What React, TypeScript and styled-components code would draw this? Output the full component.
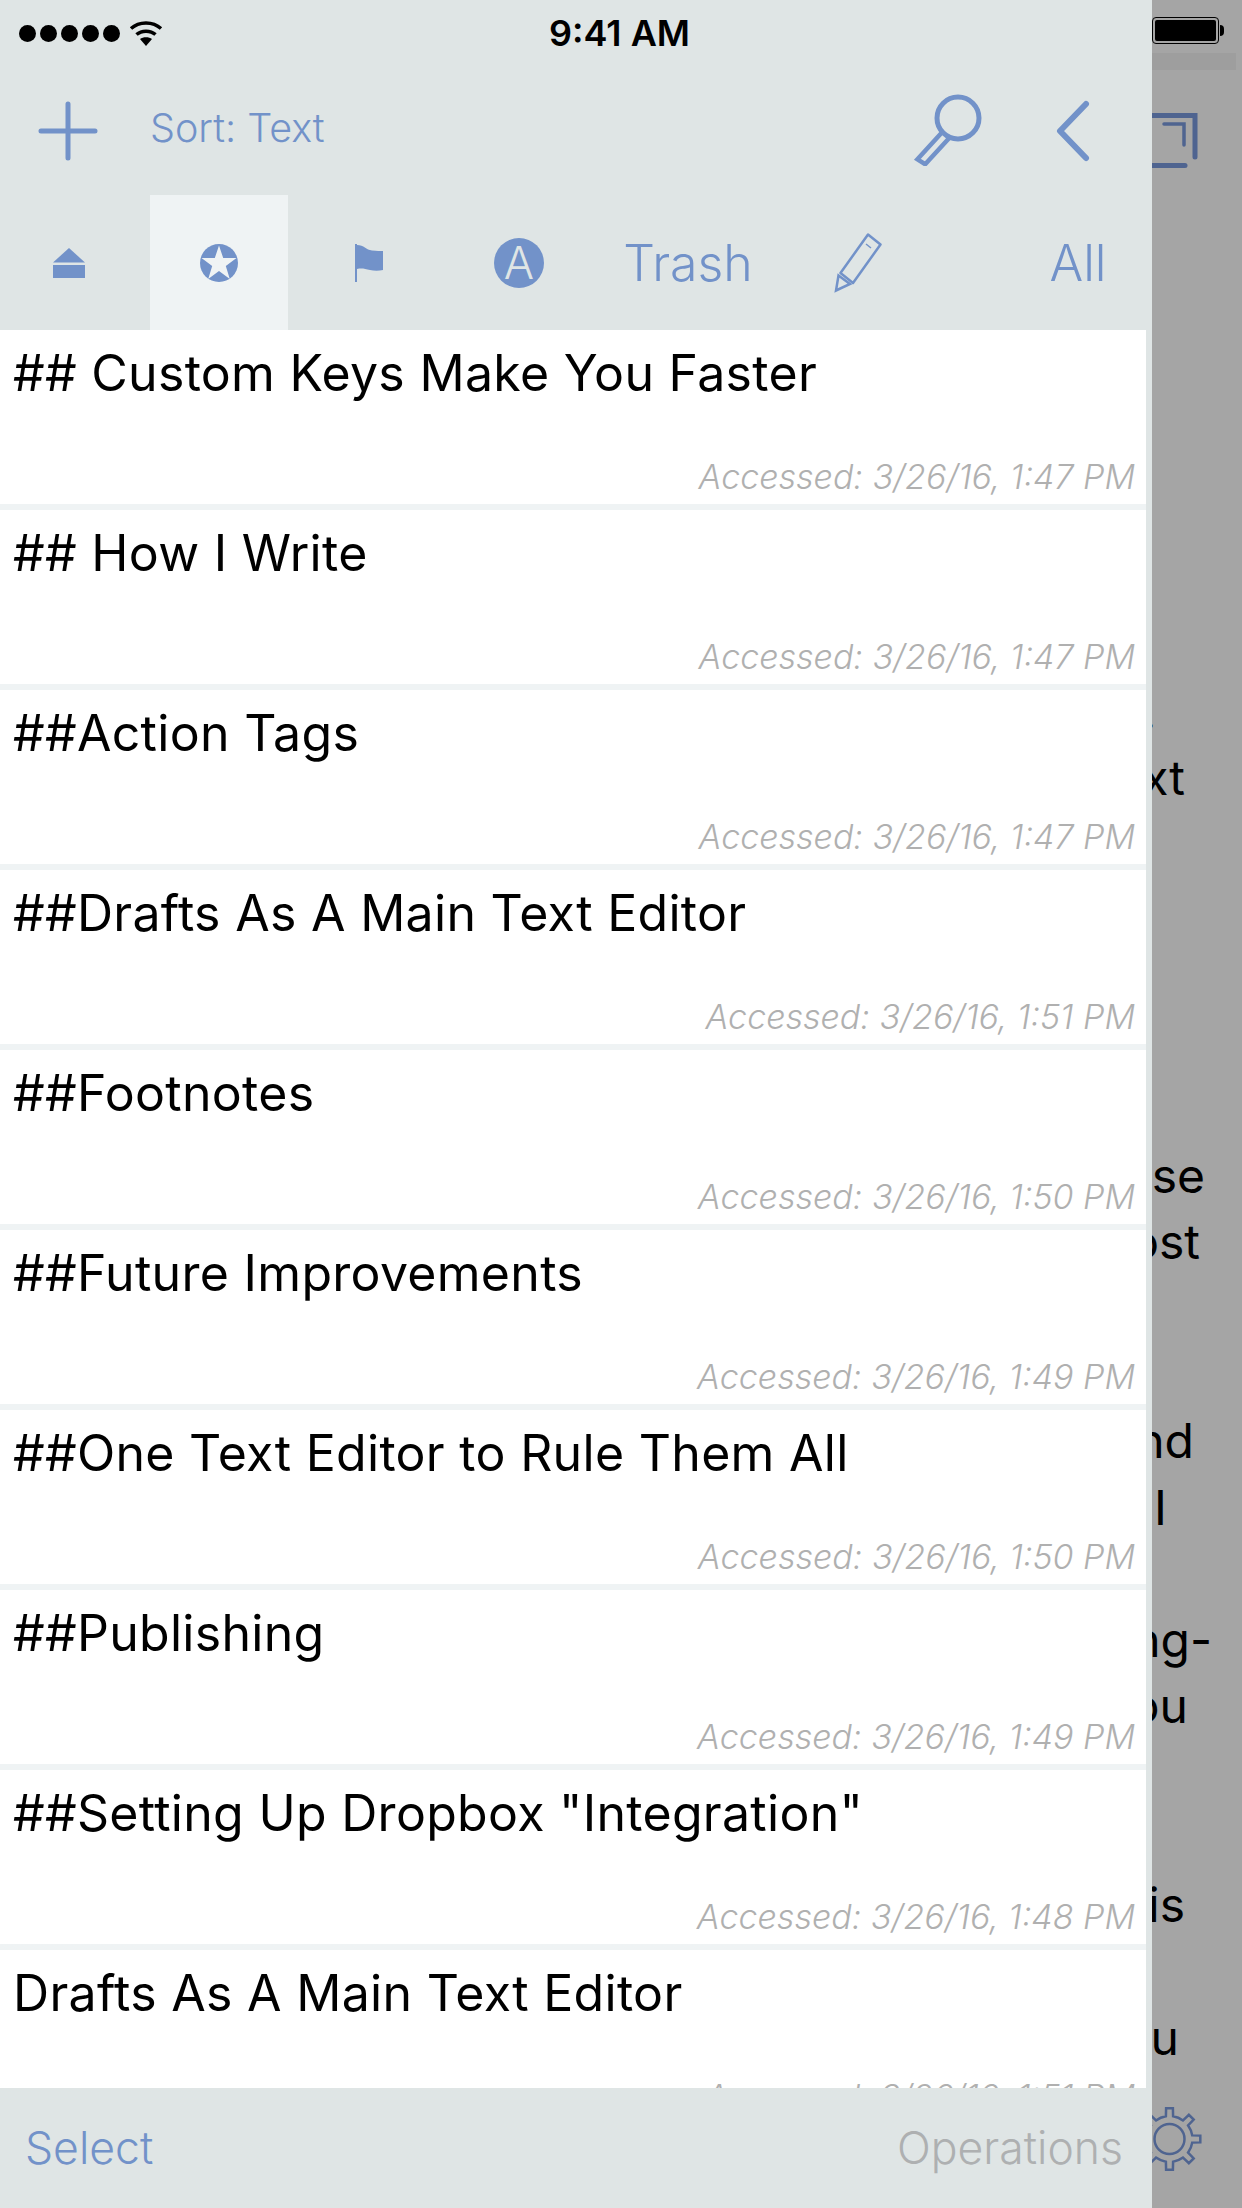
import React, { FunctionComponent } from "react"
import styled, { createGlobalStyle } from "styled-components"

const BLUE = "#7292c9"
const BAR = "#dfe5e5"
const LIGHT = "#eff3f4"
const DIM_BLUE = "#4f6490"
const SANS = `Inter, "Liberation Sans", sans-serif`

const GlobalStyle = createGlobalStyle`
    html, body {
        margin: 0;
        padding: 0;
        background: #a5a5a5;
        font-family: ${SANS};
    }
`

const Screen = styled.div`
    display: flex;
    width: 1242px;
    height: 2208px;
    overflow: hidden;
`

const Panel = styled.div`
    display: flex;
    flex-direction: column;
    flex: 0 0 1152px;
    background: ${BAR};
`

const StatusBar = styled.div`
    position: relative;
    display: flex;
    align-items: center;
    height: 66px;
    padding-left: 19px;
`

const Dots = styled.div`
    display: flex;
    gap: 4px;
`

const Dot = styled.span`
    width: 17px;
    height: 17px;
    border-radius: 50%;
    background: #000;
`

const Wifi = styled.svg`
    width: 34px;
    height: 26px;
    margin-left: 9px;
`

const Clock = styled.div`
    flex: 1;
    margin-left: 386px;
    font-size: 36px;
    font-weight: 600;
    color: #000;
    white-space: nowrap;
`

const Toolbar = styled.div`
    display: flex;
    align-items: center;
    height: 129px;
    padding-left: 38px;
`

const SortLabel = styled.div`
    margin-left: 52px;
    margin-top: -6px;
    font-size: 39.5px;
    font-weight: 300;
    color: ${BLUE};
    flex: 1;
`

const SearchIcon = styled.svg`
    width: 72px;
    height: 72px;
    margin-top: -2px;
`

const BackIcon = styled.svg`
    width: 40px;
    height: 64px;
    margin-left: 66px;
    margin-right: 61px;
`

const Tabs = styled.div`
    display: flex;
    gap: 12px;
    height: 135px;
`

const Tab = styled.div<{ $width?: number; $active?: boolean; $push?: boolean }>`
    display: flex;
    align-items: center;
    justify-content: center;
    flex: 0 0 ${props => props.$width || 138}px;
    margin-left: ${props => (props.$push ? "auto" : "0")};
    margin-right: ${props => (props.$push ? "4px" : "0")};
    background: ${props => (props.$active ? LIGHT : "transparent")};
    color: ${BLUE};
    font-size: 50px;
    font-weight: 300;
`

const LetterBadge = styled.span`
    display: flex;
    align-items: center;
    justify-content: center;
    width: 50px;
    height: 50px;
    border-radius: 50%;
    background: ${BLUE};
    color: ${BAR};
    font-size: 45px;
    font-weight: 300;
`

const List = styled.div`
    flex: 1;
    min-height: 0;
    overflow: hidden;
    margin-right: 6px;
`

const Row = styled.div`
    display: flex;
    flex-direction: column;
    justify-content: space-between;
    box-sizing: border-box;
    height: 180px;
    padding: 13px 11px 9px 13px;
    background: #fff;
    border-bottom: 6px solid ${LIGHT};
`

const Title = styled.div`
    font-size: 50px;
    line-height: 60px;
    letter-spacing: 0.3px;
    color: #000;
    white-space: nowrap;
`

const Meta = styled.div`
    align-self: flex-end;
    font-size: 34px;
    line-height: 36px;
    font-style: italic;
    font-weight: 300;
    color: #b0b0b0;
    white-space: nowrap;
`

const BottomBar = styled.div`
    display: flex;
    align-items: center;
    justify-content: space-between;
    height: 120px;
    padding: 0 29px 0 25px;
    font-size: 44.5px;
    font-weight: 300;
`

const BarLabel = styled.div<{ $disabled?: boolean }>`
    color: ${props => (props.$disabled ? "#aeb0b1" : BLUE)};
`

const Peek = styled.div`
    display: flex;
    flex-direction: column;
    flex: 1;
    min-width: 0;
    overflow: hidden;
    background: #a5a5a5;
`

const Battery = styled.div`
    position: relative;
    flex: none;
    box-sizing: border-box;
    width: 67px;
    height: 27px;
    margin-top: 17px;
    padding: 2px;
    border: 1px solid #000;
    border-radius: 4px;

    &::before {
        content: "";
        display: block;
        height: 100%;
        background: #000;
        border-radius: 2px;
    }

    &::after {
        content: "";
        position: absolute;
        left: 67px;
        top: 7px;
        width: 4px;
        height: 11px;
        background: #000;
        border-radius: 0 4px 4px 0;
    }
`

const Band = styled.div`
    flex: none;
    width: 84px;
    height: 17px;
    margin-top: 9px;
    background: #9e9e9e;
`

const FrameIcon = styled.svg`
    flex: none;
    width: 46px;
    height: 56px;
    margin-top: 43px;
`

const EditorLines = styled.div`
    margin-top: 510px;
`

const EditorLine = styled.div<{ $right: number }>`
    display: flex;
    justify-content: flex-end;
    width: ${props => props.$right}px;
    height: 66.3px;
    font-size: 48px;
    line-height: 66px;
    color: #000;
    white-space: nowrap;
`

const GearIcon = styled.svg`
    flex: none;
    width: 52px;
    height: 68px;
    margin-top: auto;
    margin-bottom: 35px;
`

interface IEntry {
    title: string
    time: string
}

const entries: IEntry[] = [
    { title: "## Custom Keys Make You Faster", time: "1:47 PM" },
    { title: "## How I Write", time: "1:47 PM" },
    { title: "##Action Tags", time: "1:47 PM" },
    { title: "##Drafts As A Main Text Editor", time: "1:51 PM" },
    { title: "##Footnotes", time: "1:50 PM" },
    { title: "##Future Improvements", time: "1:49 PM" },
    { title: "##One Text Editor to Rule Them All", time: "1:50 PM" },
    { title: "##Publishing", time: "1:49 PM" },
    { title: '##Setting Up Dropbox "Integration"', time: "1:48 PM" },
    { title: "Drafts As A Main Text Editor", time: "1:51 PM" },
]

// text of the editor behind the panel, only the line ends stick out
const editorLines: { text: string; right: number }[] = [
    { text: ".", right: 4 },
    { text: "text", right: 33 },
    { text: "", right: 0 },
    { text: "", right: 0 },
    { text: "", right: 0 },
    { text: "", right: 0 },
    { text: "", right: 0 },
    { text: "use", right: 53 },
    { text: "most", right: 48 },
    { text: "", right: 0 },
    { text: "", right: 0 },
    { text: "and", right: 42 },
    { text: "I", right: 15 },
    { text: "on", right: 1 },
    { text: "long-", right: 60 },
    { text: "you", right: 36 },
    { text: "", right: 0 },
    { text: "", right: 0 },
    { text: "this", right: 33 },
    { text: "", right: 0 },
    { text: "you", right: 27 },
]

const gearPath = (cx: number, cy: number, teeth: number) => {
    const outer = 31
    const root = 23
    const step = (Math.PI * 2) / teeth
    const point = (r: number, a: number) =>
        `${(cx + r * Math.sin(a)).toFixed(2)} ${(cy - r * Math.cos(a)).toFixed(2)}`
    let d = ""
    for (let i = 0; i < teeth; i++) {
        const a = i * step
        d += `${i === 0 ? "M" : "L"}${point(root, a - step * 0.2)} `
        d += `L${point(outer, a - step * 0.14)} `
        d += `L${point(outer, a + step * 0.14)} `
        d += `L${point(root, a + step * 0.2)} `
        d += `A${root} ${root} 0 0 1 ${point(root, a + step * 0.8)} `
    }
    return d + "Z"
}

const PlusIcon: FunctionComponent = () => (
    <svg width="60" height="60" viewBox="0 0 60 60">
        <path
            d="M30 3V57M3 30H57"
            stroke={BLUE}
            strokeWidth="5"
            strokeLinecap="round"
        />
    </svg>
)

const EjectIcon: FunctionComponent = () => (
    <svg width="32" height="30" viewBox="0 0 32 30">
        <path d="M16 0L32 14.5H0Z" fill={BLUE} />
        <rect x="0" y="17" width="32" height="13" fill={BLUE} />
    </svg>
)

const StarIcon: FunctionComponent = () => (
    <svg width="38" height="38" viewBox="0 0 38 38">
        <circle cx="19" cy="19" r="19" fill={BLUE} />
        <path
            d="M19 1.500L23.200 14H36.500L25.800 22L29.800 35L19 27L8.200 35L12.200 22L1.500 14H14.800Z"
            fill={LIGHT}
        />
    </svg>
)

const FlagIcon: FunctionComponent = () => (
    <svg width="30" height="38" viewBox="0 0 30 38">
        <path d="M1 0H3V38H1Z" fill={BLUE} />
        <path
            d="M3 1C10 1 12 6 18 6.500C23 7 26 7 29 7V26C25 27 20 27 16 26C11 25 8 24 3 25Z"
            fill={BLUE}
        />
    </svg>
)

const PencilIcon: FunctionComponent = () => (
    <svg width="48" height="60" viewBox="0 0 48 60" fill="none">
        <g stroke={BLUE} strokeWidth="2.500">
            <path d="M34 1.500L46.500 11.500L19 50L6.500 40Z" strokeLinejoin="round" />
            <path d="M4.500 42.500L2 57.500L16 51Z" />
            <path d="M32 11L37 15" strokeWidth="1.500" />
        </g>
    </svg>
)

const App: FunctionComponent = () => {
    return (
        <Screen>
            <GlobalStyle />
            <Panel>
                <StatusBar>
                    <Dots>
                        <Dot />
                        <Dot />
                        <Dot />
                        <Dot />
                        <Dot />
                    </Dots>
                    <Wifi viewBox="0 0 34 26" fill="none">
                        <path
                            d="M2 8.500C10 1 24 1 32 8.500M7.500 14.500C12.500 10 21.500 10 26.500 14.500"
                            stroke="#000"
                            strokeWidth="3.500"
                        />
                        <path d="M11 19C14 16.500 20 16.500 23 19L17 26Z" fill="#000" />
                    </Wifi>
                    <Clock>9:41 AM</Clock>
                </StatusBar>
                <Toolbar>
                    <PlusIcon />
                    <SortLabel>Sort: Text</SortLabel>
                    <SearchIcon viewBox="0 0 72 72" fill="none" stroke={BLUE}>
                        <circle cx="45" cy="24" r="21" strokeWidth="5" />
                        <path
                            d="M32 39L3 63L10 69L38 46"
                            strokeWidth="4.500"
                            transform="rotate(-8 20 54)"
                        />
                    </SearchIcon>
                    <BackIcon viewBox="0 0 40 64" fill="none">
                        <path
                            d="M35 5L9 32L35 59"
                            stroke={BLUE}
                            strokeWidth="6"
                            strokeLinecap="round"
                            strokeLinejoin="round"
                        />
                    </BackIcon>
                </Toolbar>
                <Tabs>
                    <Tab>
                        <EjectIcon />
                    </Tab>
                    <Tab $active>
                        <StarIcon />
                    </Tab>
                    <Tab>
                        <FlagIcon />
                    </Tab>
                    <Tab>
                        <LetterBadge>A</LetterBadge>
                    </Tab>
                    <Tab $width={176}>Trash</Tab>
                    <Tab $width={140}>
                        <PencilIcon />
                    </Tab>
                    <Tab $width={140} $push>
                        All
                    </Tab>
                </Tabs>
                <List>
                    {entries.map(entry => (
                        <Row key={entry.title}>
                            <Title>{entry.title}</Title>
                            <Meta>Accessed: 3/26/16, {entry.time}</Meta>
                        </Row>
                    ))}
                </List>
                <BottomBar>
                    <BarLabel>Select</BarLabel>
                    <BarLabel $disabled>Operations</BarLabel>
                </BottomBar>
            </Panel>
            <Peek>
                <Battery />
                <Band />
                <FrameIcon viewBox="0 0 46 56" fill="none" stroke={DIM_BLUE}>
                    <path d="M0 2.500H43V44" strokeWidth="5" strokeLinecap="round" />
                    <path d="M0 52.500H33" strokeWidth="5" strokeLinecap="round" />
                    <path d="M12 11H32V32" strokeWidth="3.500" strokeLinecap="round" />
                </FrameIcon>
                <EditorLines>
                    {editorLines.map((line, i) => (
                        <EditorLine key={i} $right={line.right}>
                            {line.text}
                        </EditorLine>
                    ))}
                </EditorLines>
                <GearIcon viewBox="0 0 52 68" fill="none" stroke={DIM_BLUE}>
                    <path d={gearPath(17.5, 34, 8)} strokeWidth="2.500" />
                    <circle cx="17.500" cy="34" r="15" strokeWidth="2.500" />
                </GearIcon>
            </Peek>
        </Screen>
    )
}

export default App
